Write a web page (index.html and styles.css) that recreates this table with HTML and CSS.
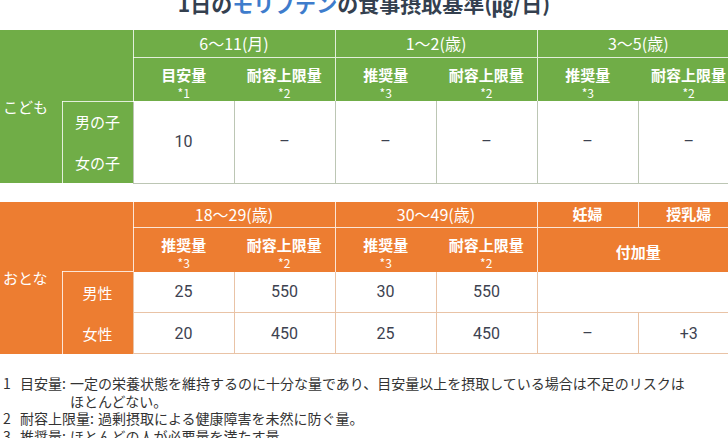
FILE: index.html
```html
<!DOCTYPE html>
<html lang="ja">
<head>
<meta charset="utf-8">
<title>モリブデンの食事摂取基準</title>
<link rel="stylesheet" href="styles.css">
</head>
<body>
<h1 class="title">1日の<span class="accent">モリブデン</span>の食事摂取基準(㎍/日)</h1>

<table class="intake intake--child">
  <colgroup>
    <col class="col-group"><col class="col-sub">
    <col class="col-val"><col class="col-val"><col class="col-val">
    <col class="col-val"><col class="col-val"><col class="col-val">
  </colgroup>
  <tr class="row-age">
    <th rowspan="4" class="group">こども</th>
    <th rowspan="2" class="blank"></th>
    <th colspan="2" class="age gs">6～11(月)</th>
    <th colspan="2" class="age gs">1～2(歳)</th>
    <th colspan="2" class="age gs">3～5(歳)</th>
  </tr>
  <tr class="row-kind">
    <th class="kind gs">目安量<small>*1</small></th>
    <th class="kind">耐容上限量<small>*2</small></th>
    <th class="kind gs">推奨量<small>*3</small></th>
    <th class="kind">耐容上限量<small>*2</small></th>
    <th class="kind gs">推奨量<small>*3</small></th>
    <th class="kind">耐容上限量<small>*2</small></th>
  </tr>
  <tr class="row-val">
    <th class="sub sub-first">男の子</th>
    <td rowspan="2">10</td>
    <td rowspan="2">–</td>
    <td rowspan="2">–</td>
    <td rowspan="2">–</td>
    <td rowspan="2">–</td>
    <td rowspan="2">–</td>
  </tr>
  <tr class="row-val">
    <th class="sub">女の子</th>
  </tr>
</table>

<table class="intake intake--adult">
  <colgroup>
    <col class="col-group"><col class="col-sub">
    <col class="col-val"><col class="col-val"><col class="col-val">
    <col class="col-val"><col class="col-val"><col class="col-val">
  </colgroup>
  <tr class="row-age">
    <th rowspan="4" class="group">おとな</th>
    <th rowspan="2" class="blank"></th>
    <th colspan="2" class="age gs">18～29(歳)</th>
    <th colspan="2" class="age gs">30～49(歳)</th>
    <th class="age age-sm gs">妊婦</th>
    <th class="age age-sm gs">授乳婦</th>
  </tr>
  <tr class="row-kind">
    <th class="kind gs">推奨量<small>*3</small></th>
    <th class="kind">耐容上限量<small>*2</small></th>
    <th class="kind gs">推奨量<small>*3</small></th>
    <th class="kind">耐容上限量<small>*2</small></th>
    <th colspan="2" class="kind kind-mid gs">付加量</th>
  </tr>
  <tr class="row-val">
    <th class="sub sub-first">男性</th>
    <td>25</td>
    <td>550</td>
    <td>30</td>
    <td>550</td>
    <td colspan="2"></td>
  </tr>
  <tr class="row-val">
    <th class="sub">女性</th>
    <td>20</td>
    <td>450</td>
    <td>25</td>
    <td>450</td>
    <td>–</td>
    <td>+3</td>
  </tr>
</table>

<ol class="notes">
  <li class="note"><span class="note-num">1</span><span class="note-label">目安量:</span><span class="note-text">一定の栄養状態を維持するのに十分な量であり、目安量以上を摂取している場合は不足のリスクは<br>ほとんどない。</span></li>
  <li class="note"><span class="note-num">2</span><span class="note-label">耐容上限量:</span><span class="note-text">過剰摂取による健康障害を未然に防ぐ量。</span></li>
  <li class="note"><span class="note-num">3</span><span class="note-label">推奨量:</span><span class="note-text">ほとんどの人が必要量を満たす量。</span></li>
</ol>
</body>
</html>
```
FILE: styles.css
```css
html, body {
  margin: 0;
  padding: 0;
  overflow: hidden;
  background: #ffffff;
}

body {
  font-family: "Noto Sans CJK JP", "Noto Sans", sans-serif;
  color: #333333;
}

.title {
  margin: -9px 0 15px;
  font-size: 21px;
  line-height: 24px;
  font-weight: 700;
  text-align: center;
  color: #34404f;
}

.title .accent {
  color: #3e7ccc;
}

.intake {
  border-collapse: collapse;
  table-layout: fixed;
  width: 739px;
}

.intake--adult {
  margin-top: 18px;
}

.col-group { width: 62px; }
.col-sub { width: 71px; }
.col-val { width: 101px; }

.intake th,
.intake td {
  padding: 0;
  text-align: center;
  font-weight: 400;
}

.intake th {
  color: #ffffff;
}

.intake--child th { background: #70ad47; }
.intake--adult th { background: #ed7d31; }

.row-age { height: 27px; }
.intake--adult .row-age { height: 26px; }
.row-kind { height: 44px; }
.row-val { height: 41px; }

.group {
  text-align: left !important;
  padding-left: 3px !important;
  font-size: 15px;
}

.age {
  font-size: 16px;
  line-height: 20px;
  border-bottom: 1px solid rgba(255, 255, 255, 0.8);
}

.age-sm {
  font-size: 15px;
  font-weight: 700 !important;
}

.gs {
  border-left: 1px solid rgba(255, 255, 255, 0.8);
}

.kind {
  vertical-align: top;
  padding-top: 7px !important;
  font-size: 15px;
  line-height: 20px;
  font-weight: 700 !important;
}

.kind small {
  display: block;
  font-size: 12px;
  line-height: 16px;
  font-weight: 400;
}

.kind-mid {
  vertical-align: middle;
  padding-top: 4px !important;
}

.sub {
  font-size: 15px;
  border-left: 1px solid rgba(255, 255, 255, 0.8);
}

.sub-first {
  border-top: 1px solid rgba(255, 255, 255, 0.8);
}

.intake td {
  font-family: Roboto, "Noto Sans", sans-serif;
  font-size: 16px;
  color: #3d4250;
  background: #ffffff;
}

.intake--child td {
  border-left: 1px solid #bcc6b4;
  border-bottom: 1px solid #bcc6b4;
}

.intake--adult td {
  border-left: 1px solid #e9c3a6;
  border-bottom: 1px solid #e9c3a6;
}

.notes {
  list-style: none;
  margin: 21px 0 0;
  padding: 0;
  font-size: 14px;
  line-height: 17.5px;
  color: #333333;
}

.note {
  display: flex;
}

.note-num {
  flex: none;
  width: 17px;
  padding-left: 3px;
}

.note-label {
  flex: none;
  margin-right: 4px;
}

.note-text {
  flex: 1;
}
```
